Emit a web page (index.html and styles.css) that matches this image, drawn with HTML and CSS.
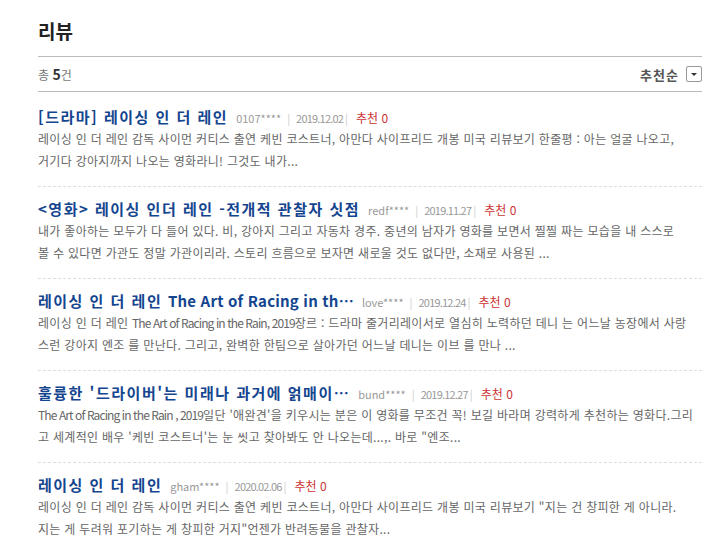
FILE: index.html
```html
<!DOCTYPE html>
<html lang="ko">
<head>
  <meta charset="UTF-8">
  <title>리뷰</title>
  <link rel="stylesheet" href="styles.css">
</head>
<body>

  <div class="review-wrap">
    <h2>리뷰</h2>

    <div class="review-head">
      <div class="total">총 <strong>5</strong>건</div>
      <div class="sort">
        <span>추천순</span>
        <span class="sort-btn"></span>
      </div>
    </div>

    <ul class="review-list">
      <li>
        <div class="review-top">
          <a class="review-title">[드라마] 레이싱 인 더 레인</a>
          <span class="writer">0107****</span>
          <span class="bar">|</span>
          <span class="date">2019.12.02</span><span class="bar">|</span>
          <span class="like">추천 0</span>
        </div>
        <p class="review-desc">레이싱 인 더 레인 감독 사이먼 커티스 출연 케빈 코스트너, 아만다 사이프리드 개봉 미국 리뷰보기 한줄평 : 아는 얼굴 나오고,<br>거기다 강아지까지 나오는 영화라니! 그것도 내가...</p>
      </li>
      <li>
        <div class="review-top">
          <a class="review-title">&lt;영화&gt; 레이싱 인더 레인 -전개적 관찰자 싯점</a>
          <span class="writer">redf****</span>
          <span class="bar">|</span>
          <span class="date">2019.11.27</span><span class="bar">|</span>
          <span class="like">추천 0</span>
        </div>
        <p class="review-desc">내가 좋아하는 모두가 다 들어 있다. 비, 강아지 그리고 자동차 경주. 중년의 남자가 영화를 보면서 찔찔 짜는 모습을 내 스스로<br>볼 수 있다면 가관도 정말 가관이리라. 스토리 흐름으로 보자면 새로울 것도 없다만, 소재로 사용된 ...</p>
      </li>
      <li>
        <div class="review-top">
          <a class="review-title">레이싱 인 더 레인 <span class="en">The Art of Racing in th…</span></a>
          <span class="writer">love****</span>
          <span class="bar">|</span>
          <span class="date">2019.12.24</span><span class="bar">|</span>
          <span class="like">추천 0</span>
        </div>
        <p class="review-desc">레이싱 인 더 레인 <span class="narrow">The Art of Racing in the Rain, 2019</span>장르 : 드라마 줄거리레이서로 열심히 노력하던 데니 는 어느날 농장에서 사랑<br>스런 강아지 엔조 를 만난다. 그리고, 완벽한 한팀으로 살아가던 어느날 데니는 이브 를 만나 ...</p>
      </li>
      <li>
        <div class="review-top">
          <a class="review-title">훌륭한 '드라이버'는 미래나 과거에 얽매이…</a>
          <span class="writer">bund****</span>
          <span class="bar">|</span>
          <span class="date">2019.12.27</span><span class="bar">|</span>
          <span class="like">추천 0</span>
        </div>
        <p class="review-desc"><span class="narrow">The Art of Racing in the Rain , 2019</span>일단 '애완견'을 키우시는 분은 이 영화를 무조건 꼭! 보길 바라며 강력하게 추천하는 영화다.그리<br>고 세계적인 배우 '케빈 코스트너'는 눈 씻고 찾아봐도 안 나오는데...,. 바로 "엔조...</p>
      </li>
      <li>
        <div class="review-top">
          <a class="review-title">레이싱 인 더 레인</a>
          <span class="writer">gham****</span>
          <span class="bar">|</span>
          <span class="date">2020.02.06</span><span class="bar">|</span>
          <span class="like">추천 0</span>
        </div>
        <p class="review-desc">레이싱 인 더 레인 감독 사이먼 커티스 출연 케빈 코스트너, 아만다 사이프리드 개봉 미국 리뷰보기 "지는 건 창피한 게 아니라.<br>지는 게 두려워 포기하는 게 창피한 거지"언젠가 반려동물을 관찰자...</p>
      </li>
    </ul>
  </div>

</body>
</html>
```

FILE: styles.css
```css
* {
  box-sizing: border-box;
  font-family: 'Noto Sans CJK KR', 'Noto Sans', sans-serif;
}

body {
  margin: 0;
  background: #fff;
  color: #333;
}

.review-wrap {
  width: 702px;
  padding: 16px 0 0 38px;
}

h2 {
  margin: 0 0 10px;
  font-size: 19px;
  line-height: 30px;
  font-weight: bold;
  color: #222;
}

.review-head {
  display: flex;
  justify-content: space-between;
  align-items: center;
  height: 36px;
  border-top: 1px solid #bbb;
  border-bottom: 1px solid #bbb;
}

.total {
  font-size: 12px;
  color: #777;
}

.total strong {
  font-size: 14px;
  color: #333;
}

.sort {
  display: flex;
  align-items: center;
  gap: 7px;
  font-size: 13px;
  font-weight: bold;
  color: #555;
  letter-spacing: 1px;
}

.sort-btn {
  position: relative;
  width: 16px;
  height: 16px;
  border: 1px solid #999;
  border-radius: 2px;
  background: #fff;
}

.sort-btn::after {
  content: '';
  position: absolute;
  left: 4px;
  top: 6px;
  border-left: 3px solid transparent;
  border-right: 3px solid transparent;
  border-top: 3px solid #333;
}

.review-list {
  list-style: none;
  margin: 3px 0 0;
  padding: 0;
}

.review-list li {
  padding: 11px 0 14px;
  border-bottom: 1px dashed #ddd;
}

.review-list li:last-child {
  border-bottom: none;
}

.review-top {
  display: flex;
  align-items: baseline;
  height: 20px;
  white-space: nowrap;
}

.review-title {
  font-size: 15px;
  font-weight: bold;
  color: #14458f;
  letter-spacing: 1.5px;
  margin-right: 8px;
}

.review-title .en {
  letter-spacing: 0.2px;
}

.writer {
  font-size: 11px;
  color: #999;
}

.date {
  font-size: 11px;
  color: #999;
  letter-spacing: -0.8px;
}

.bar {
  font-size: 11px;
  color: #ccc;
  margin: 0 6px;
}

.date + .bar {
  margin: 0 8px 0 2px;
}

.like {
  font-size: 12px;
  color: #c33;
}

.review-desc {
  margin: 2px 0 0;
  font-size: 12px;
  line-height: 22px;
  color: #666;
  letter-spacing: 0.3px;
  white-space: nowrap;
}

.narrow {
  letter-spacing: -0.9px;
}
```
